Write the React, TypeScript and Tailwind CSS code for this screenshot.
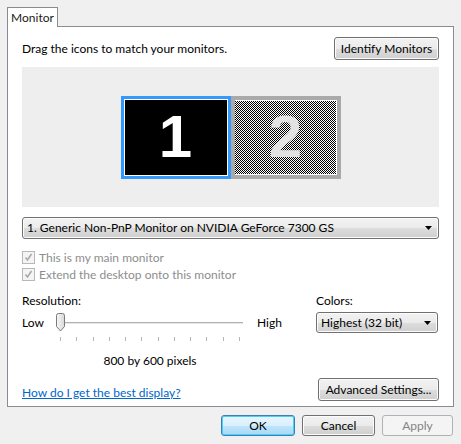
const font = { fontFamily: 'Lato, "Noto Sans", sans-serif' };

const btn =
  "flex items-center rounded-[3px] border border-[#707070] bg-[linear-gradient(#f2f2f2_0%,#ebebeb_50%,#dddddd_51%,#cfcfcf_100%)] text-[12px] text-black shadow-[inset_0_0_0_1px_#fcfcfc]";

function Arrow() {
  return (
    <svg width="7" height="4" viewBox="0 0 7 4" className="shrink-0">
      <path d="M0 0h7L3.5 4z" fill="#000" />
    </svg>
  );
}

function CheckRow({ label }: { label: string }) {
  return (
    <div className="flex h-[17px] items-center gap-[4px]">
      <div className="flex h-[13px] w-[13px] items-center justify-center border border-[#b8b8b8] bg-[#f4f4f4]">
        <svg width="9" height="9" viewBox="0 0 9 9">
          <path d="M1.5 4.5l2 2.5 4-6" stroke="#a9a9a9" strokeWidth="1.6" fill="none" />
        </svg>
      </div>
      <span className="text-[#8d8d8d]">{label}</span>
    </div>
  );
}

function Thumb() {
  return (
    <svg width="11" height="19" viewBox="0 0 11 19" className="absolute left-0 top-[1px]">
      <defs>
        <linearGradient id="tg" x1="0" x2="1">
          <stop offset="0" stopColor="#f6f6f6" />
          <stop offset="1" stopColor="#d9d9d9" />
        </linearGradient>
      </defs>
      <path d="M1.5 2.5Q1.5 0.5 3.5 0.5h4Q9.5 0.5 9.5 2.5v11L5.5 18 1.5 13.5z" fill="url(#tg)" stroke="#7a7a7a" />
    </svg>
  );
}

export default function App() {
  const ticks = Array.from({ length: 12 }, (_, i) => i);
  return (
    <div className="h-[444px] w-[461px] bg-[#f0f0f0] px-[7px] pt-[7px] text-[12px] text-black" style={font}>
      {/* tab */}
      <div className="relative z-10 -mb-px flex h-[20px] w-[51px] items-center justify-center border border-b-0 border-[#898c95] bg-white text-[#1a1a1a]">
        Monitor
      </div>

      {/* panel */}
      <div className="h-[381px] w-[447px] border border-[#898c95] bg-white px-[14px]">
        <div className="mt-[10px] flex h-[23px] items-center justify-between">
          <span>Drag the icons to match your monitors.</span>
          <div className={`${btn} h-[23px] w-[105px] justify-center`}>Identify Monitors</div>
        </div>

        {/* monitor layout */}
        <div className="mt-[7px] flex h-[140px] items-center justify-center bg-[#eeeeee]">
          <div className="flex">
            <div className="h-[83px] w-[110px] bg-[#3399ff] p-[3px]">
              <div className="flex h-full w-full items-center justify-center border-[1.5px] border-white bg-black">
                <span className="text-[60px] font-bold leading-none text-white" style={{ fontFamily: '"Liberation Sans", Arial, sans-serif' }}>
                  1
                </span>
              </div>
            </div>
            <div className="h-[83px] w-[110px] bg-[#a9a9a9] p-[4px]">
              <div className="flex h-full w-full items-center justify-center border border-dotted border-white bg-[conic-gradient(#000_25%,#fff_0_50%,#000_0_75%,#fff_0)] bg-[length:2px_2px]">
                <span className="text-[60px] font-bold leading-none text-[#e2e2e2]" style={{ fontFamily: '"Liberation Sans", Arial, sans-serif' }}>
                  2
                </span>
              </div>
            </div>
          </div>
        </div>

        {/* display select */}
        <div className={`${btn} mt-[10px] h-[22px] justify-between px-[4px]`}>
          <span>1. Generic Non-PnP Monitor on NVIDIA GeForce 7300 GS</span>
          <span className="pr-[2px]">
            <Arrow />
          </span>
        </div>

        <div className="mt-[10px]">
          <CheckRow label="This is my main monitor" />
          <CheckRow label="Extend the desktop onto this monitor" />
        </div>

        <div className="mt-[9px] flex">
          <div className="w-[294px]">
            <div className="flex h-[17px] items-center">Resolution:</div>
            <div className="mt-[3px] flex h-[21px] items-center">
              <span className="w-[33px]">Low</span>
              <div className="relative h-[21px] w-[190px]">
                <div className="absolute left-[5px] right-[2px] top-[10px] h-[2px] border-t border-[#b0b0b0] bg-[#e7e7e7]" />
                <Thumb />
              </div>
              <span className="ml-[12px]">High</span>
            </div>
            <div className="ml-[38px] mt-[4px] flex h-[5px] w-[180px] justify-between">
              {ticks.map((i) => (
                <div key={i} className="h-[4px] w-px bg-[#b6b6b6]" />
              ))}
            </div>
            <div className="ml-[33px] mt-[10px] w-[190px] text-center">800 by 600 pixels</div>
          </div>
          <div className="w-[122px]">
            <div className="flex h-[17px] items-center">Colors:</div>
            <div className={`${btn} mt-[3px] h-[21px] justify-between px-[4px]`}>
              <span>Highest (32 bit)</span>
              <span className="pr-[2px]">
                <Arrow />
              </span>
            </div>
          </div>
        </div>

        <div className="mt-[8px] flex h-[23px] items-center justify-between">
          <a className="mt-[6px] text-[#0066cc] underline">How do I get the best display?</a>
          <div className={`${btn} h-[23px] w-[121px] justify-center`}>Advanced Settings...</div>
        </div>
      </div>

      {/* dialog buttons */}
      <div className="mt-[8px] flex justify-end gap-[7px] pr-px">
        <div className="flex h-[21px] w-[74px] items-center justify-center rounded-[3px] border border-[#3c7fb1] bg-[linear-gradient(#eaf6fd_0%,#d9f0fc_50%,#bee6fd_51%,#a7d9f5_100%)] shadow-[inset_0_0_0_1px_#48d0f8]">
          OK
        </div>
        <div className={`${btn} h-[21px] w-[73px] justify-center`}>Cancel</div>
        <div className="flex h-[21px] w-[71px] items-center justify-center rounded-[3px] border border-[#adb2b5] bg-[#f4f4f4] text-[#838383]">
          Apply
        </div>
      </div>
    </div>
  );
}
